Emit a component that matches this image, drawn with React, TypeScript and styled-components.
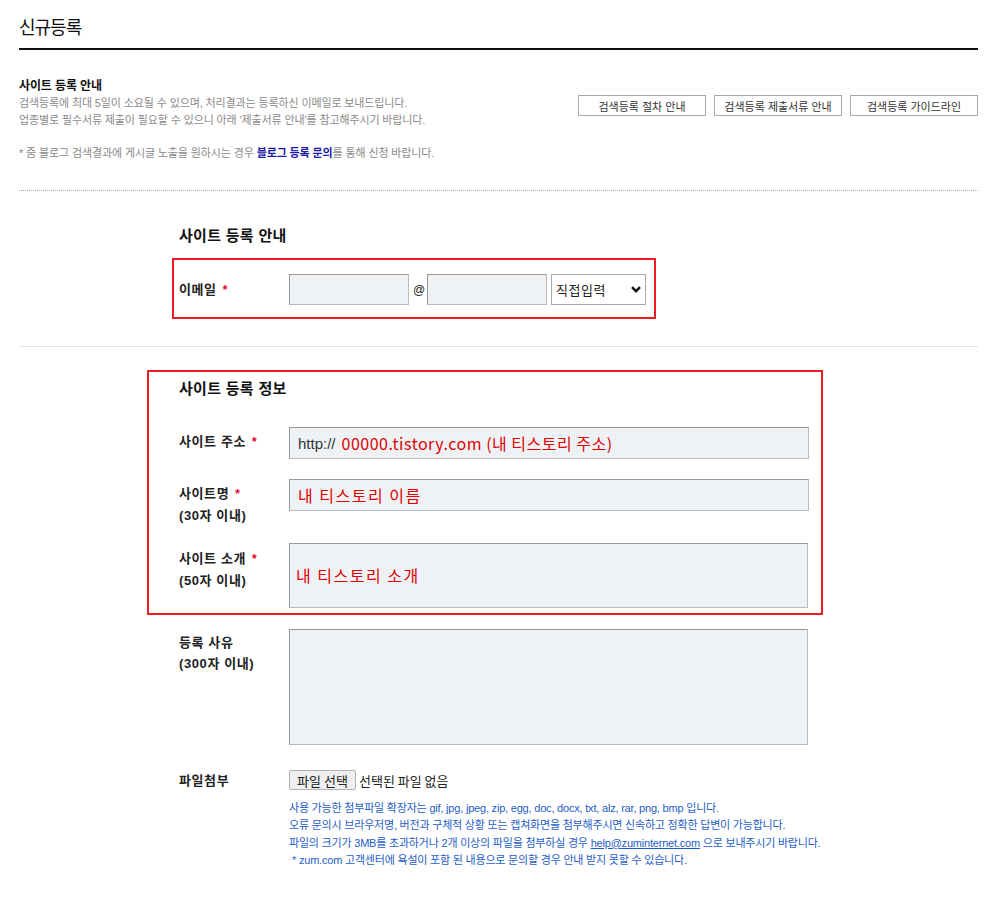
import React from "react";
import styled, { createGlobalStyle } from "styled-components";

const GlobalStyle = createGlobalStyle`
  html, body { margin: 0; padding: 0; background: #fff; }
  body {
    font-family: "Liberation Sans", "Noto Sans CJK KR", sans-serif;
    color: #222;
  }
  * { box-sizing: border-box; }
`;

const Page = styled.div`
  width: 959px;
  margin-left: 19px;
`;

const Header = styled.header`
  padding: 14px 0 6px;
  border-bottom: 2px solid #111;
`;

const Title = styled.h1`
  margin: 0;
  font-size: 18px;
  line-height: 28px;
  font-weight: normal;
  letter-spacing: -1px;
  color: #111;
`;

const Intro = styled.section`
  display: flex;
  justify-content: space-between;
  align-items: flex-start;
  padding: 28px 0 28px;
  border-bottom: 1px dotted #aaa;
`;

const IntroText = styled.div`
  font-size: 11px;
  line-height: 17px;
  color: #8a8a8a;
  letter-spacing: -0.12px;
`;

const IntroTitle = styled.h2`
  margin: 0;
  font-size: 12px;
  line-height: 17px;
  font-weight: bold;
  color: #111;
`;

const IntroLine = styled.p`
  margin: 0;
`;

const Notice = styled.p`
  margin: 16px 0 0;
`;

const NoticeLink = styled.a`
  color: #1a1aa6;
  font-weight: bold;
  text-decoration: none;
`;

const GuideButtons = styled.div`
  display: flex;
  gap: 8px;
  margin-top: 17px;
`;

const GuideButton = styled.button`
  width: 128px;
  height: 21px;
  padding: 0;
  border: 1px solid #aaa;
  background: #fff;
  font-family: inherit;
  font-size: 11px;
  color: #333;
  cursor: pointer;
`;

const FormColumn = styled.div<{ $top: number }>`
  margin-left: 160px;
  width: 630px;
  padding-top: ${(p) => p.$top}px;
`;

const SectionTitle = styled.h3`
  margin: 0;
  font-size: 15px;
  line-height: 20px;
  font-weight: bold;
  color: #111;
  letter-spacing: 0.3px;
`;

const EmailBox = styled.div`
  margin: 12px 0 0 -7px;
  width: fit-content;
  padding: 14px 8px 12px 5px;
  border: 2px solid #ec1c24;
`;

const InfoBox = styled.div`
  margin-left: -32px;
  width: 676px;
  padding: 7px 12px 5px 30px;
  border: 2px solid #ec1c24;
`;

const Divider = styled.hr`
  margin: 27px 0 0;
  border: 0;
  border-top: 1px solid #e2e2e2;
`;

const Row = styled.div<{ $gap: number }>`
  display: flex;
  align-items: flex-start;
  margin-top: ${(p) => p.$gap}px;
`;

const Label = styled.div<{ $pt: number }>`
  flex: none;
  width: 110px;
  padding-top: ${(p) => p.$pt}px;
  font-size: 13px;
  line-height: 21px;
  font-weight: bold;
  color: #222;
  letter-spacing: 0.6px;
`;

const Required = styled.span`
  color: #e4002b;
  font-size: 12px;
  margin-left: 6px;
`;

const EmailFields = styled.div`
  display: flex;
  align-items: center;
  gap: 4px;
`;

const At = styled.span`
  font-size: 12px;
  color: #222;
  width: 10px;
  text-align: center;
`;

const TextInput = styled.input<{ $w: number; $h: number }>`
  width: ${(p) => p.$w}px;
  height: ${(p) => p.$h}px;
  padding: 0 8px;
  background: #eef2f5;
  border: 1px solid;
  border-color: #999 #bbb #bbb #999;
  font-family: "Noto Sans CJK KR", sans-serif;
  font-size: 16px;
  letter-spacing: 1.5px;
  color: #e00000;
  outline: none;
`;

const SelectWrap = styled.div`
  position: relative;
  width: 95px;
  height: 31px;
`;

const Select = styled.select`
  width: 100%;
  height: 100%;
  appearance: none;
  padding: 0 0 0 4px;
  border: 1px solid #aaa;
  background: #fff;
  font-family: "Noto Sans CJK KR", sans-serif;
  font-size: 13px;
  letter-spacing: 0.5px;
  color: #222;
  outline: none;
`;

const Chevron = styled.svg`
  position: absolute;
  right: 5px;
  top: 12px;
  pointer-events: none;
`;

const AddressBox = styled.div`
  display: flex;
  align-items: center;
  width: 520px;
  height: 32px;
  padding: 0 8px;
  background: #eef2f5;
  border: 1px solid;
  border-color: #999 #bbb #bbb #999;
`;

const Prefix = styled.span`
  font-family: "Liberation Sans", sans-serif;
  font-size: 15px;
  color: #333;
  margin-right: 6px;
`;

const BareInput = styled.input`
  flex: 1;
  min-width: 0;
  height: 100%;
  padding: 0;
  border: 0;
  background: transparent;
  font-family: "Noto Sans CJK KR", sans-serif;
  font-size: 16px;
  letter-spacing: 0.5px;
  color: #e00000;
  outline: none;
`;

const TextArea = styled.textarea<{ $w: number; $h: number; $pt: number }>`
  display: block;
  width: ${(p) => p.$w}px;
  height: ${(p) => p.$h}px;
  padding: ${(p) => p.$pt}px 6px 0;
  resize: none;
  background: #eef2f5;
  border: 1px solid;
  border-color: #999 #bbb #bbb #999;
  font-family: "Noto Sans CJK KR", sans-serif;
  font-size: 16px;
  line-height: 22px;
  letter-spacing: 1.5px;
  color: #e00000;
  outline: none;
`;

const FileLine = styled.div`
  display: flex;
  align-items: center;
  height: 20px;
`;

const FileButton = styled.label`
  display: inline-flex;
  align-items: center;
  justify-content: center;
  width: 67px;
  height: 20px;
  background: #efefef;
  border: 1px solid #b4b4b4;
  border-radius: 2px;
  font-family: "Noto Sans CJK KR", sans-serif;
  font-size: 13px;
  color: #222;
  cursor: pointer;
`;

const HiddenFile = styled.input`
  display: none;
`;

const FileStatus = styled.span`
  margin-left: 3px;
  font-family: "Noto Sans CJK KR", sans-serif;
  font-size: 13px;
  color: #222;
`;

const FileField = styled.div`
  display: flex;
  flex-direction: column;
`;

const HelpList = styled.div`
  margin-top: 10px;
  font-size: 11px;
  line-height: 17.3px;
  color: #1e5dc8;
  letter-spacing: -0.2px;
`;

const HelpLine = styled.p<{ $indent?: number }>`
  margin: 0;
  padding-left: ${(p) => p.$indent ?? 0}px;
  white-space: nowrap;
`;

const HelpLink = styled.a`
  color: inherit;
  text-decoration: underline;
`;

const Bottom = styled.div`
  height: 30px;
`;

export default function App() {
  return (
    <>
      <GlobalStyle />
      <Page>
        <Header>
          <Title>신규등록</Title>
        </Header>

        <Intro>
          <IntroText>
            <IntroTitle>사이트 등록 안내</IntroTitle>
            <IntroLine>검색등록에 최대 5일이 소요될 수 있으며, 처리결과는 등록하신 이메일로 보내드립니다.</IntroLine>
            <IntroLine>업종별로 필수서류 제출이 필요할 수 있으니 아래 '제출서류 안내'를 참고해주시기 바랍니다.</IntroLine>
            <Notice>
              * 줌 블로그 검색결과에 게시글 노출을 원하시는 경우 <NoticeLink href="#">블로그 등록 문의</NoticeLink>를 통해 신청 바랍니다.
            </Notice>
          </IntroText>
          <GuideButtons>
            <GuideButton type="button">검색등록 절차 안내</GuideButton>
            <GuideButton type="button">검색등록 제출서류 안내</GuideButton>
            <GuideButton type="button">검색등록 가이드라인</GuideButton>
          </GuideButtons>
        </Intro>

        <FormColumn $top={35}>
          <SectionTitle>사이트 등록 안내</SectionTitle>
          <EmailBox>
            <Row $gap={0}>
              <Label $pt={5}>
                이메일<Required>*</Required>
              </Label>
              <EmailFields>
                <TextInput $w={120} $h={31} />
                <At>@</At>
                <TextInput $w={120} $h={31} />
                <SelectWrap>
                  <Select defaultValue="direct">
                    <option value="direct">직접입력</option>
                    <option value="naver.com">naver.com</option>
                    <option value="gmail.com">gmail.com</option>
                  </Select>
                  <Chevron width="10" height="7" viewBox="0 0 10 7">
                    <path d="M1 1.2 L5 5.2 L9 1.2" fill="none" stroke="#111" strokeWidth="2.4" />
                  </Chevron>
                </SelectWrap>
              </EmailFields>
            </Row>
          </EmailBox>
        </FormColumn>

        <Divider />

        <FormColumn $top={23}>
          <InfoBox>
            <SectionTitle>사이트 등록 정보</SectionTitle>
            <Row $gap={28}>
              <Label $pt={4}>
                사이트 주소<Required>*</Required>
              </Label>
              <AddressBox>
                <Prefix>http://</Prefix>
                <BareInput defaultValue="00000.tistory.com (내 티스토리 주소)" />
              </AddressBox>
            </Row>
            <Row $gap={20}>
              <Label $pt={4}>
                사이트명<Required>*</Required>
                <br />
                (30자 이내)
              </Label>
              <TextInput $w={520} $h={32} defaultValue="내 티스토리 이름" />
            </Row>
            <Row $gap={17}>
              <Label $pt={5}>
                사이트 소개<Required>*</Required>
                <br />
                (50자 이내)
              </Label>
              <TextArea $w={519} $h={65} $pt={20} defaultValue="내 티스토리 소개" />
            </Row>
          </InfoBox>

          <Row $gap={14}>
            <Label $pt={3}>
              등록 사유
              <br />
              (300자 이내)
            </Label>
            <TextArea $w={519} $h={116} $pt={6} />
          </Row>

          <Row $gap={25}>
            <Label $pt={0}>파일첨부</Label>
            <FileField>
              <FileLine>
                <FileButton>
                  파일 선택
                  <HiddenFile type="file" />
                </FileButton>
                <FileStatus>선택된 파일 없음</FileStatus>
              </FileLine>
              <HelpList>
                <HelpLine>사용 가능한 첨부파일 확장자는 gif, jpg, jpeg, zip, egg, doc, docx, txt, alz, rar, png, bmp 입니다.</HelpLine>
                <HelpLine>오류 문의시 브라우저명, 버전과 구체적 상황 또는 캡쳐화면을 첨부해주시면 신속하고 정확한 답변이 가능합니다.</HelpLine>
                <HelpLine>
                  파일의 크기가 3MB를 초과하거나 2개 이상의 파일을 첨부하실 경우 <HelpLink href="#">help@zuminternet.com</HelpLink> 으로 보내주시기 바랍니다.
                </HelpLine>
                <HelpLine $indent={3}>* zum.com 고객센터에 욕설이 포함 된 내용으로 문의할 경우 안내 받지 못할 수 있습니다.</HelpLine>
              </HelpList>
            </FileField>
          </Row>
          <Bottom />
        </FormColumn>
      </Page>
    </>
  );
}
